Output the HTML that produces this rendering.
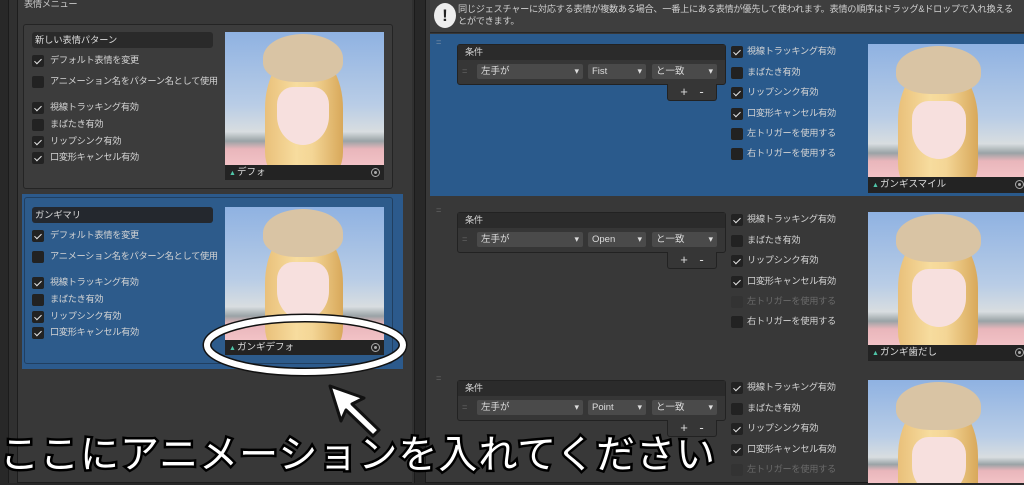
<!DOCTYPE html>
<html><head><meta charset="utf-8"><style>
*{box-sizing:border-box;margin:0;padding:0}
body{width:1024px;height:485px;overflow:hidden;background:#282828;font-family:"Liberation Sans","Noto Sans CJK JP",sans-serif;font-size:10px;color:#d2d2d2;position:relative}
.a{position:absolute}
.cb{position:absolute;width:12px;height:12px;background:#222;border-radius:2px}
.k:after{content:"";position:absolute;left:4px;top:1.5px;width:3px;height:6px;border:solid #e6e6e6;border-width:0 1.6px 1.6px 0;transform:rotate(45deg)}
.lb{position:absolute;font-size:9.2px;letter-spacing:-0.3px;white-space:nowrap;color:#d4d4d4;line-height:13px}
.img{position:absolute;overflow:hidden;background:linear-gradient(#8fb2e2 0%,#b9cde6 55%,#d8dde0 75%,#9aa3a6 82%,#e9b6bb 88%,#f2c2c6 100%)}
.hair{position:absolute;border-radius:45% 45% 20% 20%;background:linear-gradient(90deg,#e9c07a,#f7dc9e 40%,#f4d696 60%,#d8a85a)}
.hat{position:absolute;border-radius:50% 50% 40% 40%;background:#d9c4a4}
.face{position:absolute;border-radius:30% 30% 50% 50%;background:#f7e0de}
.bar{position:absolute;background:#232323;color:#ddd;font-size:9.5px;line-height:15px;padding-left:4px}
.bar:before{content:"▲";color:#4fc6a8;font-size:7px;margin-right:1px}
.tgt{position:absolute;right:4px;top:3px;width:9px;height:9px;border:1px solid #aaa;border-radius:50%}
.tgt:after{content:"";position:absolute;left:2px;top:2px;width:3px;height:3px;background:#aaa;border-radius:50%}
.dd{position:absolute;height:15px;background:#4a4a4a;border-radius:2px;color:#ddd;font-size:9.5px;line-height:15px;padding-left:4px}
.dd:after{content:"▾";position:absolute;right:4px;top:0;font-size:9px}
.pm{position:absolute;background:#363636;border:1px solid #222;border-top:none;border-radius:0 0 3px 3px;color:#ddd;font-size:13px;line-height:15px;text-align:center;word-spacing:8px}
</style></head><body>
<!-- left panel -->
<div class="a" style="left:8px;top:0;width:407px;height:483px;background:#303030;border-left:1px solid #1b1b1b;border-right:1px solid #1b1b1b"></div>
<div class="a" style="left:17px;top:0;width:395px;height:483px;background:#383838;border-left:1px solid #1d1d1d;border-bottom:1px solid #1d1d1d"></div>
<div class="lb" style="left:24px;top:-2px;color:#c8c8c8">表情メニュー</div>

<!-- card1 -->
<div class="a" style="left:23px;top:24px;width:370px;height:165px;background:#3c3c3c;border:1px solid #242424;border-radius:3px"></div>
<div class="a" style="left:32px;top:32px;width:181px;height:16px;background:#2a2a2a;border-radius:3px;color:#ddd;line-height:16px;padding-left:3px;font-size:9.2px">新しい表情パターン</div>
<div class="cb k" style="left:32px;top:55px"></div><div class="lb" style="left:50px;top:54px">デフォルト表情を変更</div>
<div class="cb" style="left:32px;top:76px"></div><div class="lb" style="left:50px;top:75px">アニメーション名をパターン名として使用</div>
<div class="cb k" style="left:32px;top:102px"></div><div class="lb" style="left:50px;top:101px">視線トラッキング有効</div>
<div class="cb" style="left:32px;top:119px"></div><div class="lb" style="left:50px;top:118px">まばたき有効</div>
<div class="cb k" style="left:32px;top:136px"></div><div class="lb" style="left:50px;top:135px">リップシンク有効</div>
<div class="cb k" style="left:32px;top:152px"></div><div class="lb" style="left:50px;top:151px">口変形キャンセル有効</div>
<div class="img" style="left:225px;top:32px;width:159px;height:133px"><div class="hair" style="left:40px;top:20px;width:78px;height:125px"></div><div class="hat" style="left:38px;top:2px;width:80px;height:48px"></div><div class="face" style="left:52px;top:55px;width:52px;height:58px"></div></div>
<div class="bar" style="left:225px;top:165px;width:159px;height:15px">デフォ<span class="tgt"></span></div>

<!-- card2 selected -->
<div class="a" style="left:22px;top:194px;width:381px;height:175px;background:#2c5a8c"></div>
<div class="a" style="left:24px;top:197px;width:369px;height:167px;background:#2d5b8b;border:1px solid #213f60;border-radius:3px"></div>
<div class="a" style="left:32px;top:207px;width:181px;height:16px;background:#24282e;border-radius:3px;color:#ddd;line-height:16px;padding-left:3px;font-size:9.2px">ガンギマリ</div>
<div class="cb k" style="left:32px;top:230px"></div><div class="lb" style="left:50px;top:229px">デフォルト表情を変更</div>
<div class="cb" style="left:32px;top:251px"></div><div class="lb" style="left:50px;top:250px">アニメーション名をパターン名として使用</div>
<div class="cb k" style="left:32px;top:277px"></div><div class="lb" style="left:50px;top:276px">視線トラッキング有効</div>
<div class="cb" style="left:32px;top:294px"></div><div class="lb" style="left:50px;top:293px">まばたき有効</div>
<div class="cb k" style="left:32px;top:311px"></div><div class="lb" style="left:50px;top:310px">リップシンク有効</div>
<div class="cb k" style="left:32px;top:327px"></div><div class="lb" style="left:50px;top:326px">口変形キャンセル有効</div>
<div class="img" style="left:225px;top:207px;width:159px;height:133px"><div class="hair" style="left:40px;top:20px;width:78px;height:125px"></div><div class="hat" style="left:38px;top:2px;width:80px;height:48px"></div><div class="face" style="left:52px;top:55px;width:52px;height:58px"></div></div>
<div class="bar" style="left:225px;top:340px;width:159px;height:15px">ガンギデフォ<span class="tgt"></span></div>

<!-- right panel -->
<div class="a" style="left:425px;top:0;width:599px;height:483px;background:#383838;border-left:1px solid #1b1b1b;border-bottom:1px solid #1b1b1b"></div>
<div class="a" style="left:430px;top:0;width:594px;height:33px;background:#3e3e3e;border-bottom:1px solid #262626"></div>
<div class="a" style="left:434px;top:3px;width:22px;height:25px;background:#eee;border-radius:50%;color:#222;font-weight:bold;font-size:17px;line-height:25px;text-align:center">!</div>
<div class="lb" style="left:458px;top:3px;font-size:9.2px;line-height:12px;color:#d0d0d0">同じジェスチャーに対応する表情が複数ある場合、一番上にある表情が優先して使われます。表情の順序はドラッグ&amp;ドロップで入れ換える<br>とができます。</div>

<div class="a" style="left:430px;top:34px;width:594px;height:162px;background:#2a5a8c"></div>

<!-- row1 -->
<div class="lb" style="left:436px;top:36px;color:#7a8fa6">=</div>
<div class="a" style="left:457px;top:44px;width:269px;height:41px;background:#363636;border-radius:3px;border:1px solid #222"></div>
<div class="a" style="left:458px;top:45px;width:267px;height:15px;background:#2b2b2b"></div>
<div class="lb" style="left:465px;top:46px">条件</div>
<div class="lb" style="left:462px;top:65px;color:#666">=</div>
<div class="dd" style="left:477px;top:64px;width:106px">左手が</div>
<div class="dd" style="left:588px;top:64px;width:58px">Fist</div>
<div class="dd" style="left:652px;top:64px;width:65px">と一致</div>
<div class="pm" style="left:667px;top:84px;width:50px;height:17px">+ -</div>
<div class="cb k" style="left:731px;top:46px"></div><div class="lb" style="left:747px;top:45px">視線トラッキング有効</div>
<div class="cb" style="left:731px;top:67px"></div><div class="lb" style="left:747px;top:66px">まばたき有効</div>
<div class="cb k" style="left:731px;top:87px"></div><div class="lb" style="left:747px;top:86px">リップシンク有効</div>
<div class="cb k" style="left:731px;top:108px"></div><div class="lb" style="left:747px;top:107px">口変形キャンセル有効</div>
<div class="cb" style="left:731px;top:128px"></div><div class="lb" style="left:747px;top:127px">左トリガーを使用する</div>
<div class="cb" style="left:731px;top:148px"></div><div class="lb" style="left:747px;top:147px">右トリガーを使用する</div>
<div class="img" style="left:868px;top:44px;width:156px;height:133px"><div class="hair" style="left:30px;top:20px;width:80px;height:125px"></div><div class="hat" style="left:28px;top:2px;width:85px;height:48px"></div><div class="face" style="left:44px;top:57px;width:54px;height:58px"></div></div>
<div class="bar" style="left:868px;top:177px;width:160px;height:16px">ガンギスマイル<span class="tgt"></span></div>

<!-- row2 -->
<div class="lb" style="left:436px;top:204px;color:#666">=</div>
<div class="a" style="left:457px;top:212px;width:269px;height:41px;background:#363636;border-radius:3px;border:1px solid #222"></div>
<div class="a" style="left:458px;top:213px;width:267px;height:15px;background:#2b2b2b"></div>
<div class="lb" style="left:465px;top:214px">条件</div>
<div class="lb" style="left:462px;top:233px;color:#666">=</div>
<div class="dd" style="left:477px;top:232px;width:106px">左手が</div>
<div class="dd" style="left:588px;top:232px;width:58px">Open</div>
<div class="dd" style="left:652px;top:232px;width:65px">と一致</div>
<div class="pm" style="left:667px;top:252px;width:50px;height:17px">+ -</div>
<div class="cb k" style="left:731px;top:214px"></div><div class="lb" style="left:747px;top:213px">視線トラッキング有効</div>
<div class="cb" style="left:731px;top:235px"></div><div class="lb" style="left:747px;top:234px">まばたき有効</div>
<div class="cb k" style="left:731px;top:255px"></div><div class="lb" style="left:747px;top:254px">リップシンク有効</div>
<div class="cb k" style="left:731px;top:276px"></div><div class="lb" style="left:747px;top:275px">口変形キャンセル有効</div>
<div class="cb" style="left:731px;top:296px;background:#333"></div><div class="lb" style="left:747px;top:295px;color:#6a6a6a">左トリガーを使用する</div>
<div class="cb" style="left:731px;top:316px"></div><div class="lb" style="left:747px;top:315px">右トリガーを使用する</div>
<div class="img" style="left:868px;top:212px;width:156px;height:133px"><div class="hair" style="left:30px;top:20px;width:80px;height:125px"></div><div class="hat" style="left:28px;top:2px;width:85px;height:48px"></div><div class="face" style="left:44px;top:57px;width:54px;height:58px"></div></div>
<div class="bar" style="left:868px;top:345px;width:160px;height:16px">ガンギ歯だし<span class="tgt"></span></div>

<!-- row3 -->
<div class="lb" style="left:436px;top:372px;color:#666">=</div>
<div class="a" style="left:457px;top:380px;width:269px;height:41px;background:#363636;border-radius:3px;border:1px solid #222"></div>
<div class="a" style="left:458px;top:381px;width:267px;height:15px;background:#2b2b2b"></div>
<div class="lb" style="left:465px;top:382px">条件</div>
<div class="lb" style="left:462px;top:401px;color:#666">=</div>
<div class="dd" style="left:477px;top:400px;width:106px">左手が</div>
<div class="dd" style="left:588px;top:400px;width:58px">Point</div>
<div class="dd" style="left:652px;top:400px;width:65px">と一致</div>
<div class="pm" style="left:667px;top:420px;width:50px;height:17px">+ -</div>
<div class="cb k" style="left:731px;top:382px"></div><div class="lb" style="left:747px;top:381px">視線トラッキング有効</div>
<div class="cb" style="left:731px;top:403px"></div><div class="lb" style="left:747px;top:402px">まばたき有効</div>
<div class="cb k" style="left:731px;top:423px"></div><div class="lb" style="left:747px;top:422px">リップシンク有効</div>
<div class="cb k" style="left:731px;top:444px"></div><div class="lb" style="left:747px;top:443px">口変形キャンセル有効</div>
<div class="cb" style="left:731px;top:464px;background:#333"></div><div class="lb" style="left:747px;top:463px;color:#6a6a6a">左トリガーを使用する</div>
<div class="img" style="left:868px;top:380px;width:156px;height:103px"><div class="hair" style="left:30px;top:20px;width:80px;height:125px"></div><div class="hat" style="left:28px;top:2px;width:85px;height:48px"></div><div class="face" style="left:44px;top:57px;width:54px;height:58px"></div></div>

<!-- annotation -->
<svg class="a" style="left:0;top:0" width="1024" height="485">
<ellipse cx="305" cy="345" rx="98" ry="27" fill="none" stroke="#111" stroke-width="9"/>
<ellipse cx="305" cy="345" rx="98" ry="27" fill="none" stroke="#fff" stroke-width="6"/>
<path d="M330 386 L364 398 L352 404 L379 430 L373 436 L346 410 L341 421 Z" fill="#fff" stroke="#111" stroke-width="3" stroke-linejoin="round"/>
<text x="0" y="468" font-family="Noto Sans CJK JP, sans-serif" font-size="39" fill="#fff" stroke="#000" stroke-width="5" paint-order="stroke" textLength="715">ここにアニメーションを入れてください</text>
</svg>
</body></html>
